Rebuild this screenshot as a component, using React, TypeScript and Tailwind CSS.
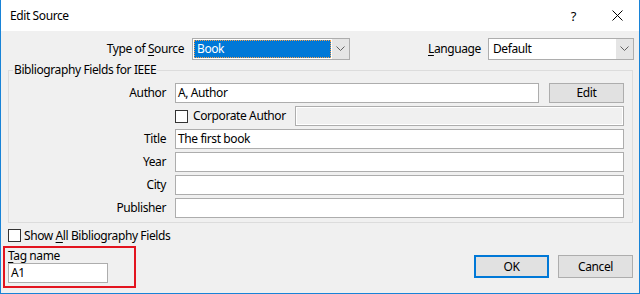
import React from "react";

const Chevron = () => (
  <svg width="9" height="6" viewBox="0 0 9 6" fill="none">
    <polyline points="0.5,0.5 4.5,4.5 8.5,0.5" stroke="#606060" strokeWidth="1" />
  </svg>
);

const Input = ({ w, value }: { w: string; value?: string }) => (
  <div className={`${w} h-[20px] border border-[#adadad] bg-white flex items-center pl-[2px] leading-[16px] whitespace-nowrap`}>
    {value}
  </div>
);

const Row = ({ label, children }: { label: string; children: React.ReactNode }) => (
  <div className="flex items-center h-[20px]">
    <div className="w-[157px] text-right leading-[16px]">{label}</div>
    <div className="ml-[9px] flex items-center">{children}</div>
  </div>
);

const Checkbox = () => <div className="w-[13px] h-[13px] border border-[#333333] bg-white shrink-0" />;

export default function App() {
  return (
    <div
      className="w-[640px] h-[294px] bg-[#f0f0f0] border-x border-b border-[#1883d7] flex flex-col text-[12px] tracking-[-0.4px] text-black overflow-hidden whitespace-nowrap"
      style={{ fontFamily: '"Noto Sans", "Open Sans", sans-serif' }}
    >
      {/* Title bar */}
      <div className="h-[31px] bg-white flex items-center shrink-0">
        <div className="pl-[9px] leading-[16px]">Edit Source</div>
        <div className="ml-auto mr-[16px] flex items-center">
          <span className="text-[13px] leading-[16px] mr-[36px]">?</span>
          <svg width="11" height="11" viewBox="0 0 11 11">
            <path d="M0.5 0.5 L10.5 10.5 M10.5 0.5 L0.5 10.5" stroke="#000" strokeWidth="1" />
          </svg>
        </div>
      </div>

      {/* Row 1 */}
      <div className="flex items-center h-[22px] mt-[7px] shrink-0">
        <div className="w-[183px] text-right leading-[16px]">
          Type of <u className="underline-offset-2">S</u>ource
        </div>
        <div className="ml-[8px] w-[158px] h-[22px] border border-[#adadad] bg-white flex">
          <div className="flex-1 p-[1px]">
            <div className="h-full bg-[#0078d7] border border-dotted border-[#f7a04a] text-white flex items-center pl-[2px] leading-[16px]">
              Book
            </div>
          </div>
          <div className="w-[17px] bg-[#e5e5e5] flex items-center justify-center">
            <Chevron />
          </div>
        </div>
        <div className="ml-[78px] w-[60px] leading-[16px]">
          <u className="underline-offset-2">L</u>anguage
        </div>
        <div className="w-[146px] h-[22px] border border-[#adadad] bg-white flex">
          <div className="flex-1 flex items-center pl-[4px] leading-[16px]">Default</div>
          <div className="w-[17px] bg-[#e5e5e5] flex items-center justify-center">
            <Chevron />
          </div>
        </div>
      </div>

      {/* Group box */}
      <div className="relative ml-[7px] mt-[10px] w-[625px] border border-[#dcdcdc] pt-[12px] pb-[4px] flex flex-col gap-[3px] shrink-0">
        <span className="absolute left-[4px] -top-[9px] px-[1px] bg-[#f0f0f0] leading-[16px]">
          Bibliography Fields for IEEE
        </span>
        <Row label="Author">
          <Input w="w-[364px]" value="A, Author" />
          <button className="ml-[10px] w-[75px] h-[20px] border border-[#adadad] bg-[#e1e1e1] leading-[16px]">
            Edit
          </button>
        </Row>
        <Row label="">
          <div className="w-[120px] flex items-center">
            <Checkbox />
            <span className="ml-[5px] leading-[16px]">Corporate Author</span>
          </div>
          <div className="w-[329px] h-[20px] border border-[#adadad] bg-[#f0f0f0] shadow-[inset_0_0_0_1px_#ffffff]" />
        </Row>
        <Row label="Title">
          <Input w="w-[449px]" value="The first book" />
        </Row>
        <Row label="Year">
          <Input w="w-[449px]" />
        </Row>
        <Row label="City">
          <Input w="w-[449px]" />
        </Row>
        <Row label="Publisher">
          <Input w="w-[449px]" />
        </Row>
      </div>

      {/* Show all */}
      <div className="flex items-center h-[17px] mt-[4px] ml-[7px] shrink-0">
        <Checkbox />
        <span className="ml-[3px] leading-[16px]">
          Show <u className="underline-offset-2">A</u>ll Bibliography Fields
        </span>
      </div>

      {/* Bottom */}
      <div className="flex mt-[2px] shrink-0">
        <div className="ml-[2px] w-[133px] h-[42px] border-2 border-[#e3141f] pl-[3px] flex flex-col">
          <div className="h-[15px] leading-[16px]">
            <u className="underline-offset-2">T</u>ag name
          </div>
          <Input w="w-[100px]" value="A1" />
        </div>
        <div className="ml-auto mr-[6px] mt-[9px] flex gap-[9px]">
          <button className="w-[75px] h-[23px] border-2 border-[#0078d7] bg-[#e1e1e1] leading-[16px]">OK</button>
          <button className="w-[75px] h-[23px] border border-[#adadad] bg-[#e1e1e1] leading-[16px]">Cancel</button>
        </div>
      </div>
    </div>
  );
}
